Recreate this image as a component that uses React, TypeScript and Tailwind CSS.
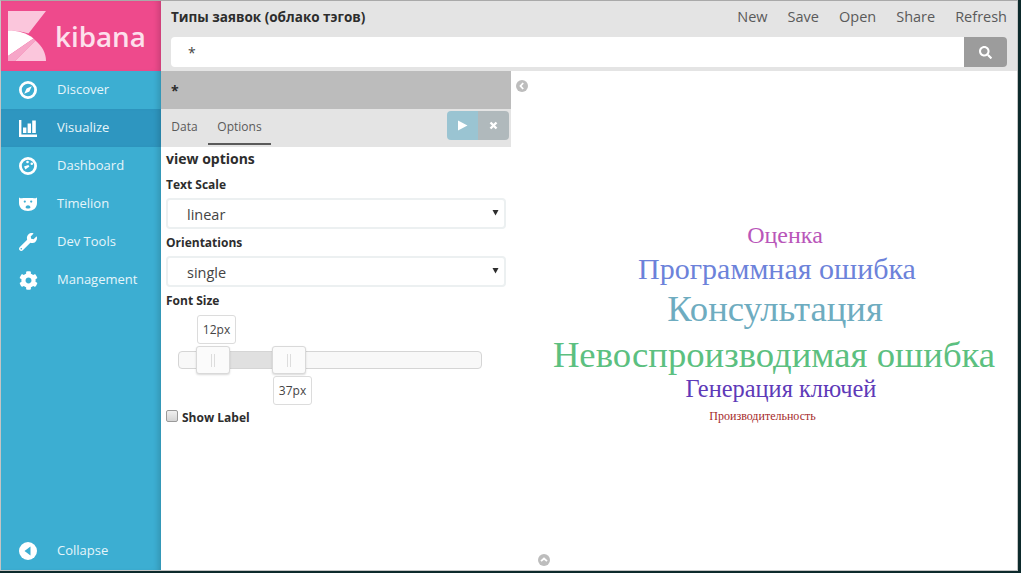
import { FaCog, FaSearch, FaWrench } from "react-icons/fa";

const navItems = [
  { label: "Discover", icon: <CompassIcon /> },
  { label: "Visualize", icon: <BarsIcon />, active: true },
  { label: "Dashboard", icon: <GaugeIcon /> },
  { label: "Timelion", icon: <BearIcon /> },
  { label: "Dev Tools", icon: <FaWrench className="h-[18px] w-[18px]" /> },
  { label: "Management", icon: <FaCog className="h-[19px] w-[19px]" /> }
];

const words = [
  { text: "Оценка", x: 785, y: 244, size: 24, color: "#b956b9" },
  { text: "Программная ошибка", x: 777, y: 280, size: 30, color: "#6c82da" },
  { text: "Консультация", x: 775, y: 322, size: 36.7, color: "#6eacc0" },
  { text: "Невоспроизводимая ошибка", x: 774, y: 368, size: 36.7, color: "#5cc080" },
  { text: "Генерация ключей", x: 781, y: 398, size: 24.4, color: "#5e3ab8" },
  { text: "Производительность", x: 762.5, y: 421, size: 12, color: "#a52a2a" }
];

export default function App() {
  return (
    <div className="h-[573px] w-[1021px] overflow-hidden bg-[#0d2a2c] font-['Open_Sans',sans-serif]">
      <div className="flex h-[571px] w-[1018px] flex-col border border-[#c4c4c4] border-t-[#a9a9a9] bg-white">
        <div className="flex min-h-0 flex-1">
          <Sidebar />
          <main className="flex min-w-0 flex-1 flex-col">
            <TopBar />
            <div className="flex min-h-0 flex-1">
              <EditorPanel />
              <Visualization />
            </div>
          </main>
        </div>
      </div>
    </div>
  );
}

function Sidebar() {
  return (
    <aside className="flex w-[160px] shrink-0 flex-col bg-[#3caed2] shadow-[inset_-6px_0_6px_-4px_rgba(0,0,0,0.18)]">
      <div className="flex h-[70px] shrink-0 items-center bg-[#ee4a8c] shadow-[inset_-6px_0_6px_-4px_rgba(0,0,0,0.18)]">
        <svg width="160" height="70" viewBox="0 0 160 70">
          <path d="M7 10H45L27.5 32.5C21.5 30.5 14 29.5 7 29.5Z" fill="#fbc6dc" />
          <path d="M7 29.5C17 29.5 26 32 32.5 37.5L7 55Z" fill="#ffffff" />
          <path d="M32.5 37.5L34.5 39.5L14 60H7V55Z" fill="#f6a6c8" />
          <path d="M34.5 39.5C41 45 45 52 45 60H14Z" fill="#fbc6dc" />
          <text x="54" y="46" fill="#fde0ec" fontSize="27.8" fontWeight="600" fontFamily="Open Sans, sans-serif">
            kibana
          </text>
        </svg>
      </div>
      {navItems.map((item) => (
        <NavRow key={item.label} label={item.label} icon={item.icon} active={item.active} />
      ))}
      <div className="mt-auto">
        <NavRow label="Collapse" icon={<CollapseIcon />} />
      </div>
    </aside>
  );
}

function NavRow({ label, icon, active }: { label: string; icon: React.ReactNode; active?: boolean }) {
  return (
    <div
      className={`flex h-[38px] items-center text-[13px] text-[#e6f5fa] ${
        active ? "bg-[#2e96c0] shadow-[inset_-6px_0_6px_-4px_rgba(0,0,0,0.18)]" : ""
      }`}
    >
      <span className="mr-[2px] flex w-[54px] justify-center text-white">{icon}</span>
      <span>{label}</span>
    </div>
  );
}

function TopBar() {
  return (
    <header className="flex h-[70px] shrink-0 flex-col bg-[#e4e4e4]">
      <div className="flex h-[31px] items-center justify-between px-[10px] pt-[1px]">
        <span className="text-[13.5px] font-bold text-[#2d2d2d]">Типы заявок (облако тэгов)</span>
        <nav className="flex gap-[20px] text-[14.5px] text-[#5a5a5a]">
          <span>New</span>
          <span>Save</span>
          <span>Open</span>
          <span>Share</span>
          <span>Refresh</span>
        </nav>
      </div>
      <div className="mx-[10px] mt-[5px] flex h-[30px]">
        <div className="flex flex-1 items-center rounded-l bg-white pl-[17px] text-[14px] text-[#444]">*</div>
        <div className="flex w-[43px] items-center justify-center rounded-r bg-[#9c9c9c] text-white">
          <FaSearch className="h-[13px] w-[13px]" />
        </div>
      </div>
    </header>
  );
}

function EditorPanel() {
  return (
    <section className="flex w-[350px] shrink-0 flex-col">
      <div className="flex h-[38px] items-center bg-[#bcbcbc] pl-[10px] text-[14px] font-bold text-[#2d2d2d]">*</div>
      <div className="flex h-[38px] items-start justify-between bg-[#e4e4e4]">
        <div className="flex h-[36px] text-[12px] text-[#5a5a5a]">
          <span className="flex w-[47px] items-center justify-center">Data</span>
          <span className="flex w-[63px] items-center justify-center border-y-2 border-t-transparent border-b-[#5a5a5a]">
            Options
          </span>
        </div>
        <div className="mt-[2px] mr-[2px] flex h-[29px] overflow-hidden rounded">
          <span className="flex w-[31px] items-center justify-center bg-[#9ac4d2]">
            <svg width="11" height="11" viewBox="0 0 11 11">
              <path d="M1 0.5L10.5 5.5L1 10.5Z" fill="#ffffff" />
            </svg>
          </span>
          <span className="flex w-[31px] items-center justify-center bg-[#b0b9bc]">
            <svg width="9" height="9" viewBox="0 0 9 9">
              <path d="M1.5 1.5L7.5 7.5M7.5 1.5L1.5 7.5" stroke="#ffffff" strokeWidth="2.4" />
            </svg>
          </span>
        </div>
      </div>
      <div className="px-[5px] text-[#2d2d2d]">
        <h2 className="mt-[1px] text-[14px] leading-[22px] font-bold">view options</h2>
        <FieldLabel className="mt-[6px]">Text Scale</FieldLabel>
        <SelectBox value="linear" />
        <FieldLabel className="mt-[5px]">Orientations</FieldLabel>
        <SelectBox value="single" />
        <FieldLabel className="mt-[5px]">Font Size</FieldLabel>
        <FontSlider />
        <label className="flex h-[17px] items-center gap-[4px] text-[12px] font-bold">
          <span className="mb-[4px] h-[12px] w-[12px] rounded-[2px] border border-[#9a9a9a] bg-gradient-to-b from-[#f0f0f0] to-[#d4d4d4]" />
          Show Label
        </label>
      </div>
    </section>
  );
}

function FieldLabel({ children, className }: { children: React.ReactNode; className?: string }) {
  return <div className={`text-[12px] leading-[17px] font-bold ${className}`}>{children}</div>;
}

function SelectBox({ value }: { value: string }) {
  return (
    <div className="mt-[5px] flex h-[31px] w-[340px] items-center justify-between rounded-[4px] border-2 border-[#ecf0f1] pr-[5px] pl-[19px] text-[14.5px] text-[#444]">
      <span className="pt-[2px]">{value}</span>
      <svg className="mb-[2px]" width="7" height="7" viewBox="0 0 7 7">
        <path d="M0.5 1H6.5L3.5 6.5Z" fill="#2d2d2d" />
      </svg>
    </div>
  );
}

function FontSlider() {
  return (
    <div className="relative mt-[6px] h-[94px]">
      <Bubble className="top-0 left-[31px]">12px</Bubble>
      <div className="absolute top-[36px] left-[12px] h-[18px] w-[304px] rounded-[4px] border border-[#d5d5d5] bg-[#f8f8f8]" />
      <div className="absolute top-[37px] left-[63px] h-[16px] w-[44px] bg-[#e0e0e0]" />
      <Handle className="left-[30px]" />
      <Handle className="left-[106px]" />
      <Bubble className="top-[61px] left-[107px]">37px</Bubble>
    </div>
  );
}

function Bubble({ children, className }: { children: React.ReactNode; className: string }) {
  return (
    <div
      className={`absolute flex h-[29px] w-[39px] items-center justify-center rounded-[3px] border border-[#dcdcdc] bg-white text-[12px] text-[#444] ${className}`}
    >
      {children}
    </div>
  );
}

function Handle({ className }: { className: string }) {
  return (
    <div
      className={`absolute top-[31px] flex h-[28px] w-[34px] items-center justify-center gap-[2px] rounded-[3px] border border-[#d9d9d9] bg-[#fbfbfb] shadow-[0_1px_2px_rgba(0,0,0,0.15)] ${className}`}
    >
      <span className="h-[13px] w-px bg-[#dddddd]" />
      <span className="h-[13px] w-px bg-[#dddddd]" />
    </div>
  );
}

function Visualization() {
  return (
    <section className="relative min-w-0 flex-1">
      <svg className="absolute top-0 left-0" width="506" height="498" viewBox="511 72 506 498">
        {words.map((word) => (
          <text
            key={word.text}
            x={word.x}
            y={word.y}
            fill={word.color}
            fontSize={word.size}
            textAnchor="middle"
            fontFamily="Liberation Serif, serif"
          >
            {word.text}
          </text>
        ))}
      </svg>
      <span className="absolute top-[9px] left-[5px] flex h-[12px] w-[12px] items-center justify-center rounded-full bg-[#bdbdbd]">
        <svg width="8" height="8" viewBox="0 0 8 8">
          <path d="M5.2 1L2.5 4L5.2 7" stroke="#ffffff" strokeWidth="1.8" fill="none" />
        </svg>
      </span>
      <span className="absolute bottom-[4px] left-[27px] flex h-[12px] w-[12px] items-center justify-center rounded-full bg-[#bdbdbd]">
        <svg width="8" height="8" viewBox="0 0 8 8">
          <path d="M1 5.2L4 2.5L7 5.2" stroke="#ffffff" strokeWidth="1.8" fill="none" />
        </svg>
      </span>
    </section>
  );
}

function CompassIcon() {
  return (
    <svg width="18" height="18" viewBox="0 0 18 18">
      <circle cx="9" cy="9" r="7.6" fill="none" stroke="#ffffff" strokeWidth="2.8" />
      <path d="M12.8 5.2L10.4 10.4L5.2 12.8L7.6 7.6Z" fill="#ffffff" />
    </svg>
  );
}

function BarsIcon() {
  return (
    <svg width="18" height="17" viewBox="0 0 18 17">
      <path d="M0 0H2.4V14.4H18V17H0Z" fill="#ffffff" />
      <rect x="4" y="7.5" width="3.4" height="5.5" fill="#ffffff" />
      <rect x="8.6" y="3.5" width="3.4" height="9.5" fill="#ffffff" />
      <rect x="13.2" y="0.5" width="3.6" height="12.5" fill="#ffffff" />
    </svg>
  );
}

function GaugeIcon() {
  return (
    <svg width="18" height="18" viewBox="0 0 18 18">
      <circle cx="9" cy="9" r="7.6" fill="none" stroke="#ffffff" strokeWidth="2.8" />
      <circle cx="8.5" cy="5" r="1.3" fill="#ffffff" />
      <circle cx="12.8" cy="6.8" r="1.3" fill="#ffffff" />
      <path d="M5 9.5L9.4 8L10.4 9.6L6.4 12.4Z" fill="#ffffff" />
    </svg>
  );
}

function BearIcon() {
  return (
    <svg width="18" height="14" viewBox="0 0 18 14">
      <path d="M0 0.5C1.5 1.5 3 1.5 4 1H14C15 1.5 16.5 1.5 18 0.5V6C18 11 14 14 9 14C4 14 0 11 0 6Z" fill="#ffffff" />
      <circle cx="5.8" cy="4.6" r="1.1" fill="#3caed2" />
      <circle cx="12.2" cy="4.6" r="1.1" fill="#3caed2" />
      <path d="M6.5 10.4C7 7.6 11 7.6 11.5 10.4C10 12 8 12 6.5 10.4Z" fill="#3caed2" />
    </svg>
  );
}

function CollapseIcon() {
  return (
    <svg width="18" height="18" viewBox="0 0 18 18">
      <circle cx="9" cy="9" r="9" fill="#ffffff" />
      <path d="M11.5 4.5V13.5L5.5 9Z" fill="#3caed2" />
    </svg>
  );
}
